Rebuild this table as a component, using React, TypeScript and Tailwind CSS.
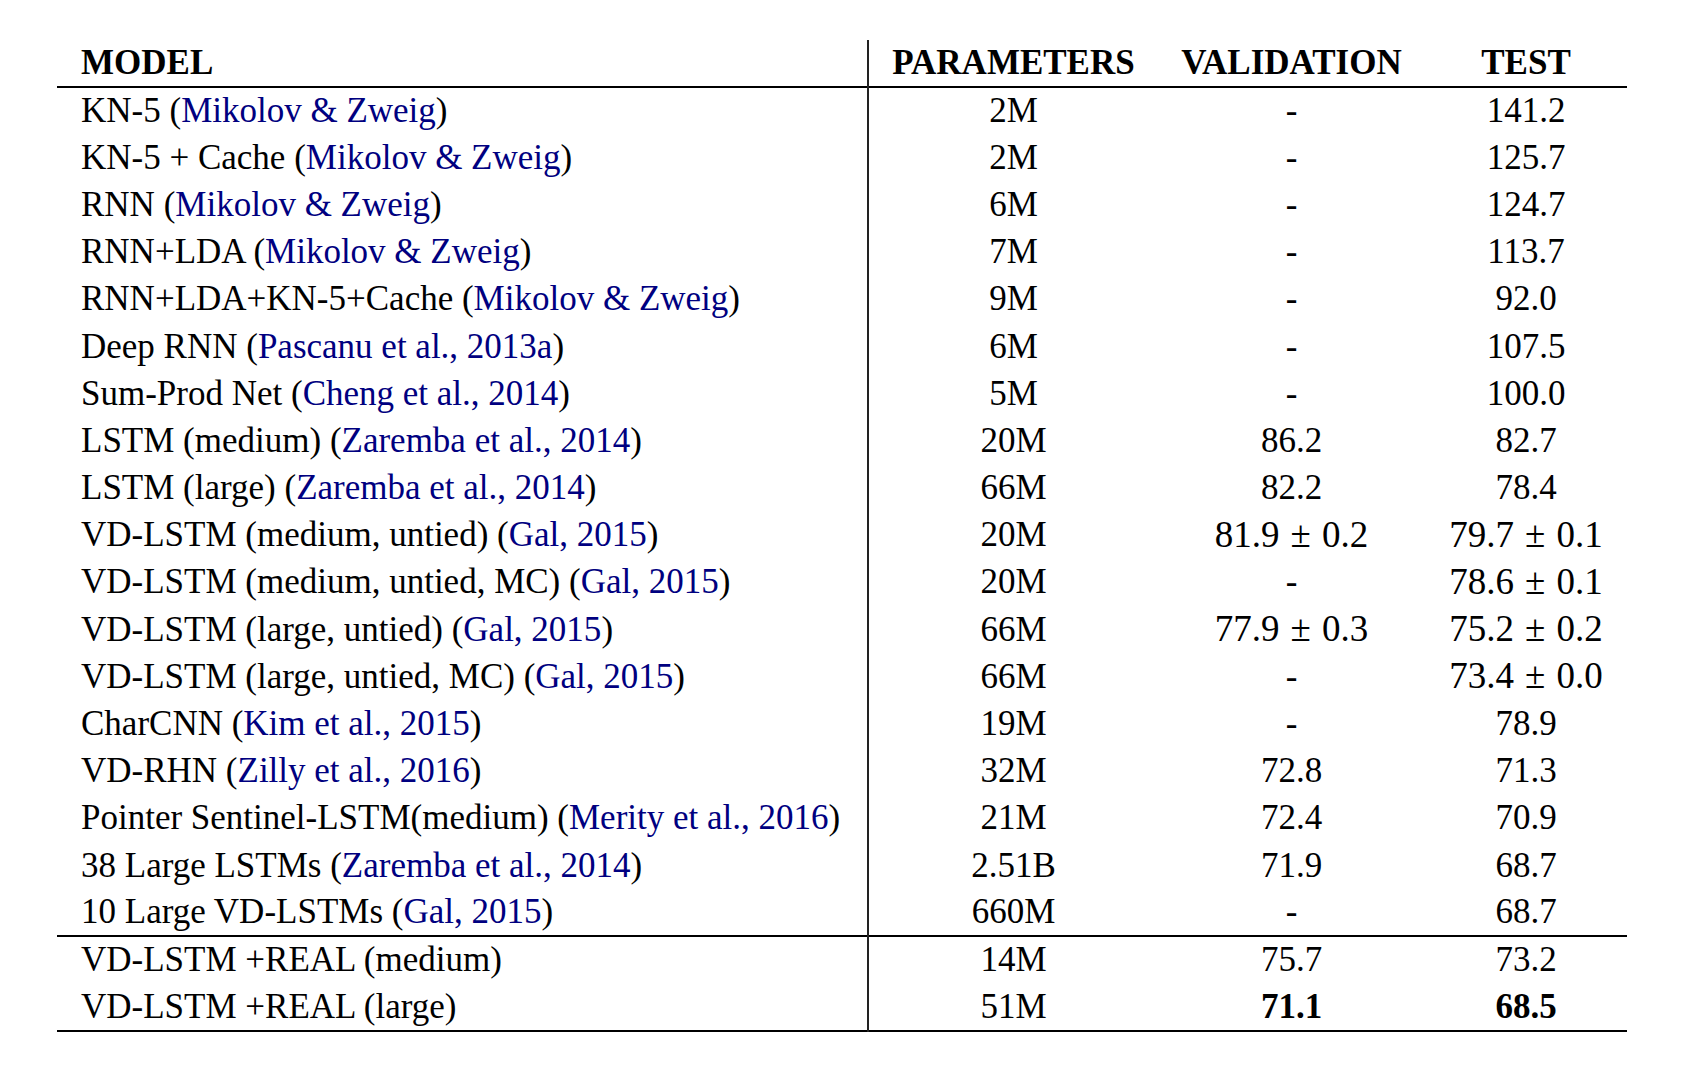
type Row = {
  model: string;
  cite?: string;
  params: string;
  valid: React.ReactNode;
  test: React.ReactNode;
};

function PM({ a, b }: { a: string; b: string }) {
  return (
    <span className="text-[37px]">
      {a}
      <span className="mx-[11px]">±</span>
      {b}
    </span>
  );
}

const rows: Row[] = [
  { model: "KN-5", cite: "Mikolov & Zweig", params: "2M", valid: "-", test: "141.2" },
  { model: "KN-5 + Cache", cite: "Mikolov & Zweig", params: "2M", valid: "-", test: "125.7" },
  { model: "RNN", cite: "Mikolov & Zweig", params: "6M", valid: "-", test: "124.7" },
  { model: "RNN+LDA", cite: "Mikolov & Zweig", params: "7M", valid: "-", test: "113.7" },
  { model: "RNN+LDA+KN-5+Cache", cite: "Mikolov & Zweig", params: "9M", valid: "-", test: "92.0" },
  { model: "Deep RNN", cite: "Pascanu et al., 2013a", params: "6M", valid: "-", test: "107.5" },
  { model: "Sum-Prod Net", cite: "Cheng et al., 2014", params: "5M", valid: "-", test: "100.0" },
  { model: "LSTM (medium)", cite: "Zaremba et al., 2014", params: "20M", valid: "86.2", test: "82.7" },
  { model: "LSTM (large)", cite: "Zaremba et al., 2014", params: "66M", valid: "82.2", test: "78.4" },
  {
    model: "VD-LSTM (medium, untied)",
    cite: "Gal, 2015",
    params: "20M",
    valid: <PM a="81.9" b="0.2" />,
    test: <PM a="79.7" b="0.1" />,
  },
  {
    model: "VD-LSTM (medium, untied, MC)",
    cite: "Gal, 2015",
    params: "20M",
    valid: "-",
    test: <PM a="78.6" b="0.1" />,
  },
  {
    model: "VD-LSTM (large, untied)",
    cite: "Gal, 2015",
    params: "66M",
    valid: <PM a="77.9" b="0.3" />,
    test: <PM a="75.2" b="0.2" />,
  },
  {
    model: "VD-LSTM (large, untied, MC)",
    cite: "Gal, 2015",
    params: "66M",
    valid: "-",
    test: <PM a="73.4" b="0.0" />,
  },
  { model: "CharCNN", cite: "Kim et al., 2015", params: "19M", valid: "-", test: "78.9" },
  { model: "VD-RHN", cite: "Zilly et al., 2016", params: "32M", valid: "72.8", test: "71.3" },
  {
    model: "Pointer Sentinel-LSTM(medium)",
    cite: "Merity et al., 2016",
    params: "21M",
    valid: "72.4",
    test: "70.9",
  },
  { model: "38 Large LSTMs", cite: "Zaremba et al., 2014", params: "2.51B", valid: "71.9", test: "68.7" },
  { model: "10 Large VD-LSTMs", cite: "Gal, 2015", params: "660M", valid: "-", test: "68.7" },
];

const ours: Row[] = [
  { model: "VD-LSTM +REAL (medium)", params: "14M", valid: "75.7", test: "73.2" },
  {
    model: "VD-LSTM +REAL (large)",
    params: "51M",
    valid: <b className="font-bold">71.1</b>,
    test: <b className="font-bold">68.5</b>,
  },
];

function BodyRow({ r, first }: { r: Row; first?: boolean }) {
  return (
    <tr className={`h-[47.2px] ${first ? "border-t-2 border-black" : ""}`}>
      <td className="border-r-2 border-r-[#222] pl-[24px] text-left whitespace-nowrap">
        {r.model}
        {r.cite && (
          <>
            {" ("}
            <span className="text-[#000080]">{r.cite}</span>
            {")"}
          </>
        )}
      </td>
      <td className="text-center">{r.params}</td>
      <td className="text-center">{r.valid}</td>
      <td className="text-center">{r.test}</td>
    </tr>
  );
}

export default function App() {
  return (
    <div className="min-h-[1068px] w-[1694px] bg-white pl-[57px] pt-[40px] font-['Liberation_Serif',serif] text-[35px] leading-[40px] text-black">
      <table className="w-[1570px] table-fixed border-collapse">
        <colgroup>
          <col className="w-[811px]" />
          <col className="w-[290px]" />
          <col className="w-[267px]" />
          <col className="w-[202px]" />
        </colgroup>
        <thead>
          <tr className="h-[47px] border-b-2 border-black font-bold">
            <th className="border-r-2 border-r-[#222] pl-[24px] text-left align-middle">MODEL</th>
            <th className="text-center">PARAMETERS</th>
            <th className="text-center">VALIDATION</th>
            <th className="text-center">TEST</th>
          </tr>
        </thead>
        <tbody className="border-b-2 border-black">
          {rows.map((r, i) => (
            <BodyRow key={i} r={r} />
          ))}
          {ours.map((r, i) => (
            <BodyRow key={"o" + i} r={r} first={i === 0} />
          ))}
        </tbody>
      </table>
    </div>
  );
}
